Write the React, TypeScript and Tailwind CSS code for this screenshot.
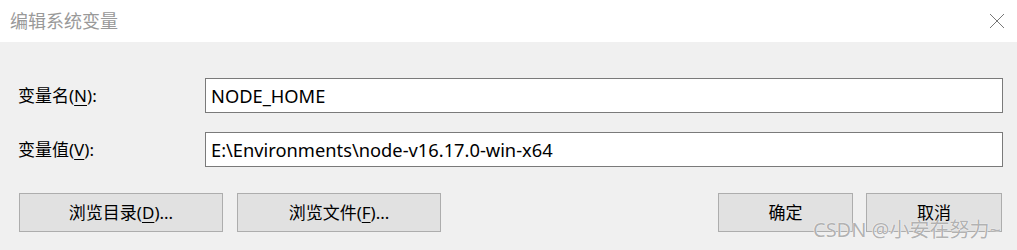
import React from "react";

const FONT = { fontFamily: '"Noto Sans", "Noto Sans CJK SC", sans-serif' };

function Mn({ children }: { children: React.ReactNode }) {
  return <span className="underline underline-offset-[3px] decoration-1">{children}</span>;
}

function Btn({ children, className }: { children: React.ReactNode; className: string }) {
  return (
    <button
      className={`h-[39px] bg-[#e1e1e1] border border-[#adadad] text-[17px] text-black flex items-center justify-center ${className}`}
    >
      {children}
    </button>
  );
}

export default function App() {
  return (
    <div className="w-[1017px] h-[250px] bg-[#f0f0f0] overflow-hidden relative" style={FONT}>
      <div className="h-[42px] bg-white flex items-center justify-between pl-[10px] pr-[12px]">
        <span className="text-[18px] text-[#999999] leading-none">编辑系统变量</span>
        <svg width="16" height="16" viewBox="0 0 16 16" className="text-[#777]">
          <path d="M1 1 L15 15 M15 1 L1 15" stroke="currentColor" strokeWidth="1" fill="none" />
        </svg>
      </div>

      <div className="pt-[36px] pl-[18px] pr-[14px]">
        <div className="flex items-center h-[35px]">
          <label className="w-[187px] text-[17px] text-black">
            变量名(<Mn>N</Mn>):
          </label>
          <div className="flex-1 h-[35px] bg-white border border-[#7a7a7a] flex items-center pl-[5px] text-[18.3px] text-black">
            NODE_HOME
          </div>
        </div>
        <div className="flex items-center h-[35px] mt-[19px]">
          <label className="w-[187px] text-[17px] text-black">
            变量值(<Mn>V</Mn>):
          </label>
          <div className="flex-1 h-[35px] bg-white border border-[#7a7a7a] flex items-center pl-[5px] text-[18.3px] text-black">
            E:\Environments\node-v16.17.0-win-x64
          </div>
        </div>
      </div>

      <div className="flex mt-[26px] pl-[19px] pr-[15px]">
        <Btn className="w-[204px]">
          浏览目录(<Mn>D</Mn>)...
        </Btn>
        <Btn className="w-[204px] ml-[14px]">
          浏览文件(<Mn>F</Mn>)...
        </Btn>
        <div className="flex-1" />
        <Btn className="w-[135px]">确定</Btn>
        <Btn className="w-[136px] ml-[13px]">取消</Btn>
      </div>

      <div className="absolute left-[813px] top-[220px] text-[20px] text-[#a8a8a8]/90 leading-none whitespace-nowrap [text-shadow:0_0_1px_#fff,0_0_1px_#fff]">
        CSDN @小安在努力~
      </div>
    </div>
  );
}
